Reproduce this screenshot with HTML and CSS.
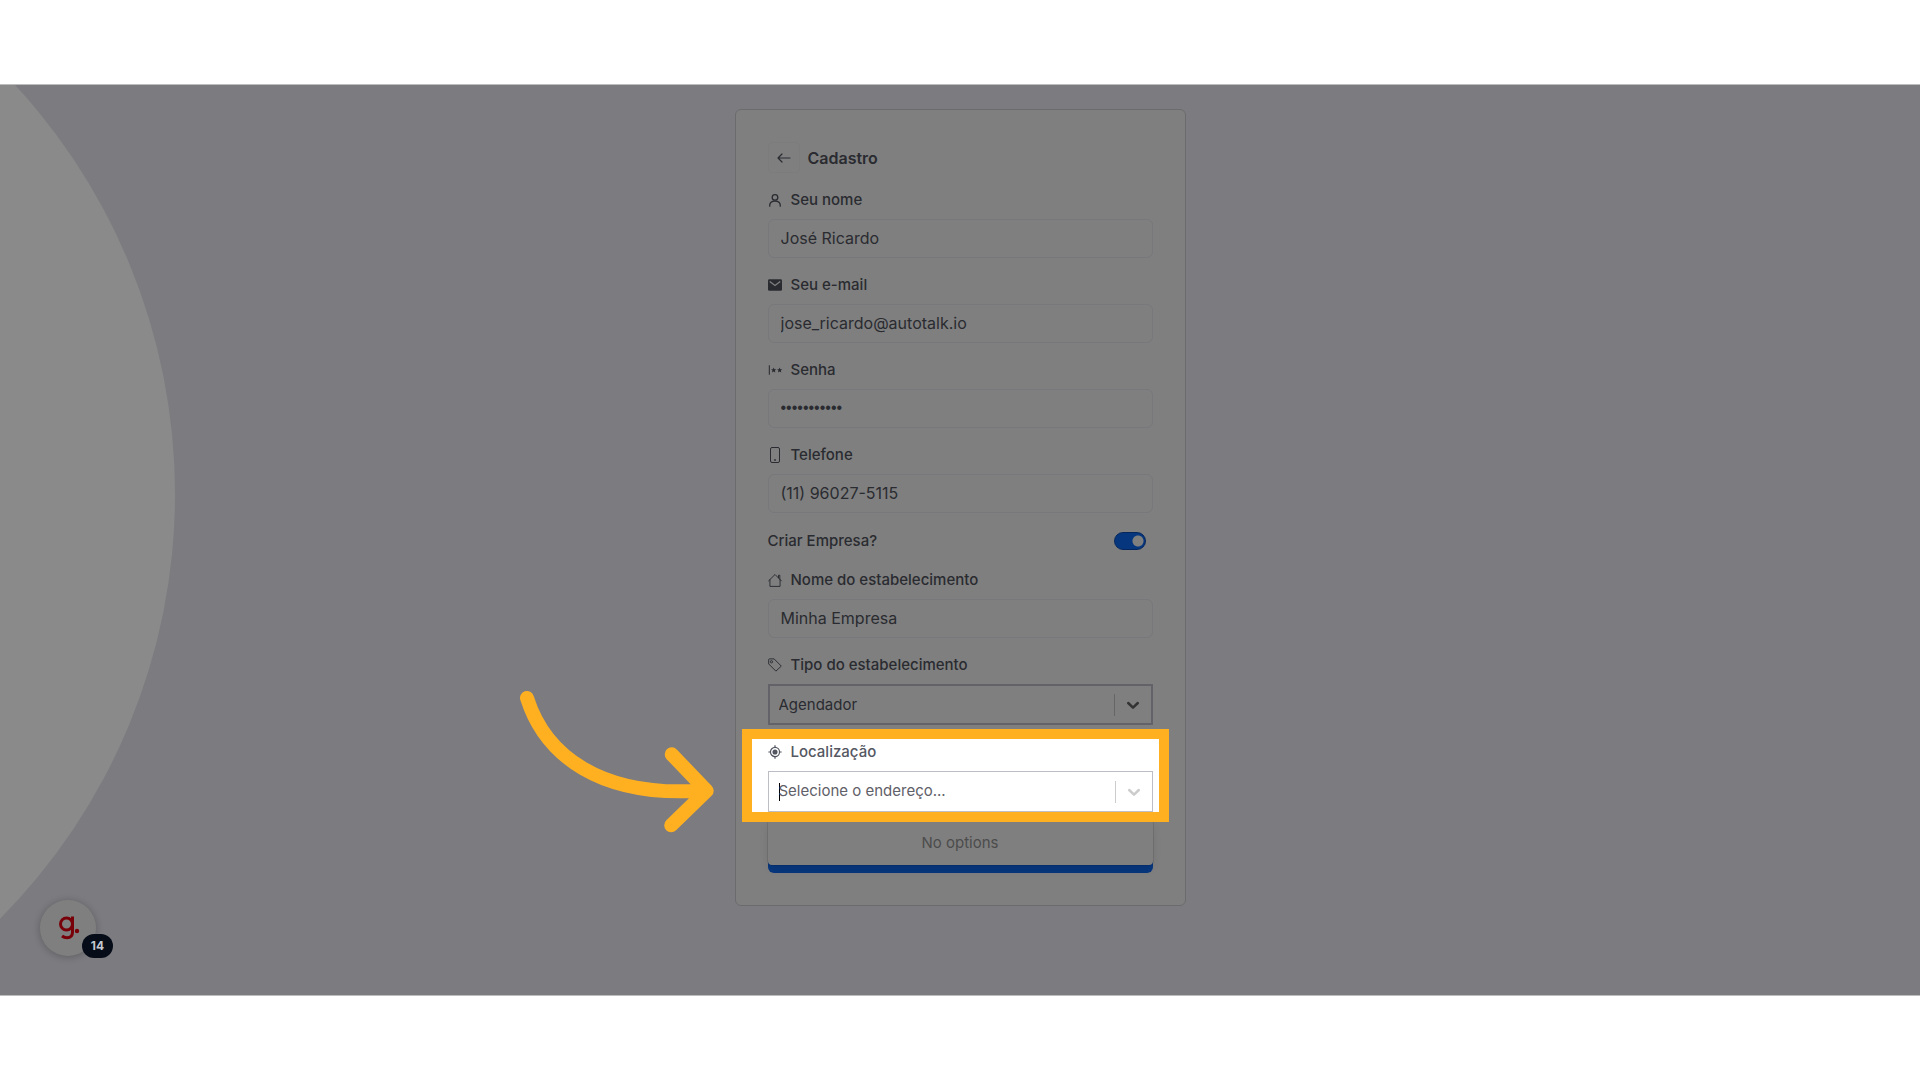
FILE: index.html
```html
<!DOCTYPE html>
<html lang="pt-BR">
<head>
<meta charset="utf-8">
<meta name="viewport" content="width=device-width, initial-scale=1">
<title>Cadastro</title>
<link rel="stylesheet" href="styles.css">
</head>
<body>
<main class="stage">
  <form class="card">
    <header class="card-header">
      <button class="back" type="button" aria-label="Voltar">
        <svg width="16" height="16" viewBox="0 0 16 16" fill="none" stroke="currentColor" stroke-width="1.2" stroke-linecap="round" stroke-linejoin="round"><path d="M14 8H2M6 4 2 8l4 4"/></svg>
      </button>
      <h1 class="title">Cadastro</h1>
    </header>

    <div class="field">
      <label class="label" for="nome">
        <svg class="icon" viewBox="0 0 16 16" fill="none" stroke="currentColor" stroke-width="1.5" stroke-linecap="round"><circle cx="8" cy="5" r="3.2"/><path d="M2 15v-1c0-3 2.600-4.800 6-4.800s6 1.800 6 4.800v1"/></svg>
        Seu nome
      </label>
      <input class="input" id="nome" type="text" value="José Ricardo">
    </div>

    <div class="field">
      <label class="label" for="email">
        <svg class="icon" viewBox="0 0 16 16"><rect x="0" y="1.500" width="16" height="13" rx="1.500" fill="currentColor"/><path d="m2 4 6 4.500L14 4" fill="none" stroke="#fff" stroke-width="1.500"/></svg>
        Seu e-mail
      </label>
      <input class="input" id="email" type="email" value="jose_ricardo@autotalk.io">
    </div>

    <div class="field">
      <label class="label" for="senha">
        <svg class="icon" viewBox="0 0 16 16" fill="currentColor" stroke="currentColor"><path d="M1.500 2.500v11" fill="none" stroke-width="1.200"/><path stroke="none" d="m6.500 5 .9 2 2.100.2-1.600 1.500.5 2.200-1.900-1.100-1.900 1.100.5-2.200-1.600-1.500 2.100-.2zM13.300 5l.9 2 2.100.2-1.600 1.500.5 2.200-1.900-1.100-1.900 1.100.5-2.200-1.600-1.500 2.100-.2z"/></svg>
        Senha
      </label>
      <input class="input input-password" id="senha" type="password" value="autotalk123">
    </div>

    <div class="field">
      <label class="label" for="telefone">
        <svg class="icon icon-tall" viewBox="0 0 14 18" fill="none" stroke="currentColor"><rect x="2.500" y="1.500" width="9" height="15" rx="1.500"/><circle cx="7" cy="14" r=".9" fill="currentColor" stroke="none"/></svg>
        Telefone
      </label>
      <input class="input" id="telefone" type="tel" value="(11) 96027-5115">
    </div>

    <div class="switch-row">
      <label class="label" for="criar">Criar Empresa?</label>
      <input class="switch" id="criar" type="checkbox" role="switch" checked>
    </div>

    <div class="field">
      <label class="label" for="estabelecimento">
        <svg class="icon" viewBox="0 0 16 16" fill="none" stroke="currentColor" stroke-width="1.100" stroke-linejoin="round" stroke-linecap="round"><path d="M.7 9 8 1.700 15.300 9M2.200 7.700v7.600h11.600V7.700M12 5.500v-3h1.500V7"/></svg>
        Nome do estabelecimento
      </label>
      <input class="input" id="estabelecimento" type="text" value="Minha Empresa">
    </div>

    <div class="field">
      <label class="label" for="tipo">
        <svg class="icon" viewBox="0 0 16 16" fill="none" stroke="currentColor" stroke-width="1.100" stroke-linejoin="round"><path d="M.8 1.800v5L9 15l6.200-5.700L7 1H1.600a.8.8 0 0 0-.8.8z"/><circle cx="4" cy="4.300" r="1.300"/></svg>
        Tipo do estabelecimento
      </label>
      <div class="combo combo-active">
        <select class="combo-control" id="tipo"><option>Agendador</option></select>
        <span class="combo-divider"></span>
        <svg class="chevron" viewBox="0 0 20 20" fill="none" stroke="currentColor" stroke-width="2.500" stroke-linecap="round" stroke-linejoin="round"><path d="m5.200 8 4.800 4.600L14.800 8"/></svg>
      </div>
    </div>

    <div class="field field-location">
      <label class="label" for="local">
        <svg class="icon" viewBox="0 0 16 16" fill="none" stroke="currentColor" stroke-width="1.400"><circle cx="8" cy="8" r="5.200"/><circle cx="8" cy="8" r="2.900" fill="currentColor" stroke="none"/><path d="M8 .4V3M8 13v2.600M.4 8H3M13 8h2.600"/></svg>
        Localização
      </label>
      <div class="combo">
        <span class="caret"></span>
        <input class="combo-control" id="local" type="text" role="combobox" aria-expanded="true" aria-controls="opcoes" placeholder="Selecione o endereço...">
        <span class="combo-divider"></span>
        <svg class="chevron" viewBox="0 0 20 20" fill="none" stroke="currentColor" stroke-width="2.500" stroke-linecap="round" stroke-linejoin="round"><path d="m5.200 8 4.800 4.600L14.800 8"/></svg>
      </div>
      <div class="menu" id="opcoes" role="listbox">No options</div>
      <div class="spotlight">
        <svg class="arrow" width="240" height="180" viewBox="0 0 240 180" fill="none" stroke="currentColor" stroke-width="14" stroke-linecap="round" stroke-linejoin="round"><path d="M27 28C45 85 100 128 203 120.500M171.700 84.300l35 36.500-35.500 34.500"/></svg>
      </div>
    </div>

    <button class="submit" type="submit" aria-label="Cadastrar"></button>
  </form>

  <button class="launcher" type="button" aria-label="Guias">
    <svg width="56" height="56" viewBox="0 0 56 56" fill="none" stroke="currentColor" stroke-width="3"><circle cx="26.500" cy="24" r="6"/><path d="M32.500 16.500v15.500c0 4-2.500 5.800-5.500 5.800-2 0-3.500-.6-5-1.800"/><circle cx="37" cy="31" r="2.200" fill="currentColor" stroke="none"/></svg>
    <span class="badge">14</span>
  </button>
</main>
</body>
</html>
```
FILE: styles.css
```css
* {
  box-sizing: border-box;
}

body {
  margin: 0;
  padding: 84px 0;
  background: #fff;
  color: #545762;
  font-family: Inter, "Noto Sans", sans-serif;
  font-size: 15px;
}

input,
select,
button {
  font: inherit;
  color: inherit;
}

.stage {
  position: relative;
  z-index: 0;
  overflow: hidden;
  display: flex;
  justify-content: center;
  padding: 24px 16px 89px;
  background: #f9f7ff;
  border-block: 1px solid #bdbdbd;
}

/* pale disc behind the left edge */
.stage::before {
  content: "";
  position: absolute;
  z-index: 5;
  left: -1031px;
  top: -194px;
  width: 1206px;
  height: 1206px;
  border-radius: 50%;
  background: #8a8a8b;
}

.card {
  display: flex;
  flex-direction: column;
  gap: 16px;
  width: 100%;
  max-width: 451px;
  padding: 32px;
  background: #fff;
  border: 1px solid #d6d6dc;
  border-radius: 6px;
}

.card-header {
  display: flex;
  align-items: center;
  gap: 8px;
}

.back {
  display: grid;
  place-items: center;
  width: 32px;
  height: 31px;
  padding: 0;
  background: none;
  border: 1px solid #f8f8fa;
  border-radius: 4px;
}

.title {
  margin: 0;
  font-size: 16px;
  font-weight: 600;
  line-height: 24px;
}

.field {
  display: flex;
  flex-direction: column;
  gap: 8px;
}

.field-location {
  position: relative;
}

.label {
  display: flex;
  align-items: center;
  gap: 9px;
  font-weight: 500;
  font-size: 15px;
  line-height: 22px;
}

.icon {
  width: 14px;
  height: 14px;
  overflow: visible;
}

.icon-tall {
  height: 18px;
}

.input {
  width: 100%;
  height: 39px;
  padding: 0 12px 2px;
  background: #fff;
  border: 1px solid #eeeef8;
  border-radius: 6px;
  outline: 0;
  font-size: 16px;
}

.input-password {
  font-family: "Liberation Sans", Arial, sans-serif;
}

.switch-row {
  display: flex;
  align-items: center;
  justify-content: space-between;
  height: 24px;
  padding-right: 7px;
}

.switch {
  appearance: none;
  width: 32px;
  height: 18px;
  margin: 0;
  border: 1px solid #0b4cb8;
  border-radius: 9px;
  background: radial-gradient(circle at 23px 8px, #fff 5px, #0d6efd 6px);
}

.combo {
  display: flex;
  align-items: center;
  height: 41px;
  padding-right: 8px;
  border: 1px solid #bdbdc6;
  color: #ccc;
}

.combo-active {
  border: 2px solid #c6c4d2;
  color: #666;
}

.combo-control {
  appearance: none;
  flex: 1;
  min-width: 0;
  height: 100%;
  padding: 0 10px 2px;
  background: none;
  border: 0;
  outline: 0;
  color: #545762;
}

.combo-active .combo-control {
  padding: 0 9px;
}

.combo-control::placeholder {
  color: #5f6068;
  opacity: 1;
}

.combo-divider {
  width: 1px;
  height: 22px;
  margin-right: 8px;
  background: #ccc;
}

.chevron {
  width: 20px;
  height: 20px;
}

.caret {
  width: 1px;
  height: 18px;
  margin: 0 -11px 0 10px;
  background: #000;
}

.menu {
  position: absolute;
  z-index: 1;
  inset: 79px 0 auto;
  padding: 12px;
  background: #fff;
  border-radius: 4px;
  box-shadow: 0 0 0 1px rgb(0 0 0 / 10%), 0 4px 11px rgb(0 0 0 / 10%);
  color: #999;
  line-height: 21px;
  text-align: center;
}

/* orange frame; its shadow dims the rest of the stage */
.spotlight {
  position: absolute;
  z-index: 4;
  inset: -12px -16px -10px -26px;
  border: 10px solid #ffb021;
  box-shadow: 0 0 0 4000px rgb(0 0 0 / 50%);
  pointer-events: none;
}

.arrow {
  position: absolute;
  left: -252px;
  top: -69px;
  color: #ffb021;
}

.submit {
  height: 45px;
  background: #0d6efd;
  border: 0;
  border-radius: 6px;
}

.launcher {
  position: absolute;
  left: 40px;
  bottom: 39px;
  width: 56px;
  height: 56px;
  padding: 0;
  background: #fff;
  border: 0;
  border-radius: 50%;
  box-shadow: 0 1px 8px rgb(0 0 0 / 25%);
  color: #f00010;
}

.badge {
  position: absolute;
  z-index: 6;
  right: -17px;
  bottom: -2px;
  width: 31px;
  border-radius: 12px;
  background: #070d18;
  color: #c4c8d0;
  font-size: 12px;
  font-weight: 700;
  line-height: 24px;
}
```
